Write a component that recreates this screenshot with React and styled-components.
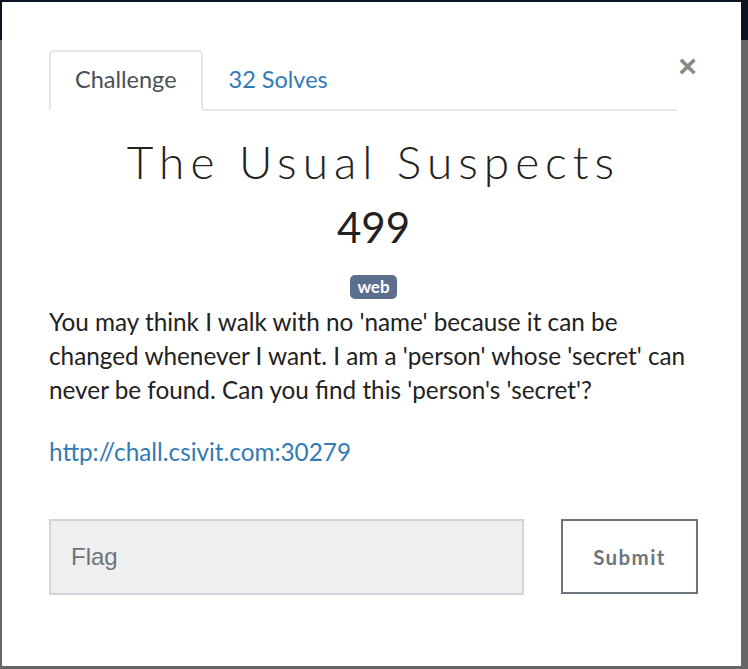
import React from "react";
import styled, { createGlobalStyle } from "styled-components";

const Global = createGlobalStyle`
  html, body { margin: 0; padding: 0; }
  body {
    background: linear-gradient(to bottom, #0b1222 0, #0b1222 40px, #666 40px, #666 100%);
    font-family: "Lato", "Liberation Sans", sans-serif;
    height: 669px;
    overflow: hidden;
  }
`;

const Modal = styled.div`
  margin: 2px 7px 0 2px;
  height: 664px;
  background: #fff;
  box-sizing: border-box;
  padding: 48px 43px 0 47px;
`;

const TopRow = styled.div`
  display: flex;
  align-items: flex-start;
  margin-right: 20px;
`;

const Tabs = styled.ul`
  flex: 1;
  display: flex;
  list-style: none;
  margin: 0;
  padding: 0;
  border-bottom: 2px solid #e3e6ea;
`;

const Tab = styled.li`
  box-sizing: border-box;
  height: 61px;
  margin-bottom: -2px;
  padding: 0 24px 4px;
  display: flex;
  align-items: center;
  font-size: 23.5px;
  color: ${p => (p.$active ? "#495057" : "#337ab7")};
  border: 2px solid ${p => (p.$active ? "#e3e6ea" : "transparent")};
  border-bottom-color: ${p => (p.$active ? "#fff" : "transparent")};
  border-radius: 5px 5px 0 0;
`;

const Close = styled.button`
  background: none;
  border: 0;
  padding: 0;
  margin: 0 -19px 0 1px;
  font-size: 32px;
  font-weight: 700;
  line-height: 1;
  color: #888;
  font-family: "Liberation Sans", sans-serif;
  cursor: pointer;
`;

const Title = styled.h2`
  margin: 24px 0 0;
  text-align: center;
  font-family: "Lato", sans-serif;
  font-weight: 300;
  font-size: 46px;
  letter-spacing: 6px;
  line-height: 54px;
  color: #222;
`;

const Points = styled.h3`
  margin: 14px 0 0;
  text-align: center;
  font-weight: 400;
  font-size: 42px;
  line-height: 48px;
  color: #222;
`;

const Tags = styled.div`
  display: flex;
  justify-content: center;
  margin-top: 24px;
`;

const Badge = styled.span`
  display: inline-block;
  background: #5b6e8b;
  color: #fff;
  font-weight: 700;
  font-size: 17px;
  line-height: 24px;
  padding: 0 7px;
  border-radius: 5px;
`;

const Description = styled.p`
  margin: 6px 0 0;
  font-size: 24.3px;
  line-height: 34px;
  color: #222;
`;

const Link = styled.a`
  display: block;
  margin-top: 28px;
  font-size: 24.3px;
  line-height: 34px;
  color: #337ab7;
  text-decoration: none;
`;

const Form = styled.div`
  display: grid;
  grid-template-columns: 1fr 137px;
  gap: 37px;
  margin-top: 50px;
`;

const Input = styled.input`
  box-sizing: border-box;
  height: 76px;
  width: 100%;
  background: #efefef;
  border: 2px solid #d0d5db;
  padding: 0 20px;
  font-size: 24px;
  font-family: "Liberation Sans", Arial, sans-serif;
  color: #333;
  &::placeholder { color: #6c757d; }
  outline: none;
`;

const SubmitButton = styled.button`
  box-sizing: border-box;
  height: 75px;
  background: #fff;
  border: 2px solid #6c757d;
  color: #6c757d;
  font-family: "Lato", sans-serif;
  font-weight: 700;
  font-size: 20.5px;
  letter-spacing: 1.4px;
  cursor: pointer;
`;

export default function App() {
  return (
    <>
      <Global />
      <Modal>
        <TopRow>
          <Tabs>
            <Tab $active>Challenge</Tab>
            <Tab>32 Solves</Tab>
          </Tabs>
          <Close aria-label="Close">×</Close>
        </TopRow>
        <Title>The Usual Suspects</Title>
        <Points>499</Points>
        <Tags>
          <Badge>web</Badge>
        </Tags>
        <Description>
          You may think I walk with no 'name' because it can be changed whenever I want. I am a 'person' whose 'secret' can never be found. Can you find this 'person's 'secret'?
        </Description>
        <Link href="#">http://chall.csivit.com:30279</Link>
        <Form>
          <Input placeholder="Flag" />
          <SubmitButton>Submit</SubmitButton>
        </Form>
      </Modal>
    </>
  );
}
